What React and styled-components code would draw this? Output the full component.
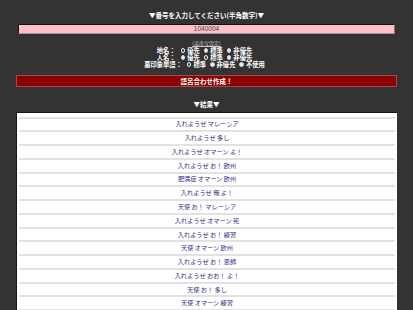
import React from 'react'
import styled, { createGlobalStyle } from 'styled-components'

const GlobalStyle = createGlobalStyle`
  html, body {
    margin: 0;
    padding: 0;
    background: #333333;
  }
  body {
    font-family: "Noto Sans CJK JP", "Liberation Sans", sans-serif;
  }
`;

const Page = styled.div`
  width: 413px;
  min-height: 310px;
  box-sizing: border-box;
  padding: 11px 16px 0;
  background: #333333;
  color: #ffffff;
  display: flex;
  flex-direction: column;
  align-items: stretch;
`;

const Heading = styled.div`
  font-size: 6.5px;
  font-weight: bold;
  line-height: 8px;
  text-align: center;
  margin-top: ${p => p.$top || 0}px;
`;

const NumberInput = styled.div`
  margin: 5px 2px 0;
  height: 10px;
  box-sizing: border-box;
  background: #ffc0cb;
  border-top: 1px solid #111;
  border-left: 1px solid #111;
  border-right: 1px solid #777;
  border-bottom: 1px solid #999;
  color: #444;
  font-family: "Liberation Sans", sans-serif;
  font-size: 6.5px;
  line-height: 8px;
  text-align: center;
`;

const Settings = styled.div`
  margin-top: 5px;
  display: flex;
  flex-direction: column;
  align-items: center;
`;

const SettingsLink = styled.a`
  font-size: 5px;
  line-height: 7px;
  color: #cccccc;
  text-decoration: underline;
  margin-bottom: 1px;
`;

const OptionRow = styled.div`
  display: flex;
  align-items: center;
  font-size: 6.3px;
  font-weight: bold;
  line-height: 7px;
  height: 7px;
`;

const Label = styled.span`
  margin-right: 5px;
`;

const Option = styled.span`
  display: inline-flex;
  align-items: center;
  margin-right: 4px;
`;

const Radio = styled.span`
  display: inline-block;
  width: 4.5px;
  height: 4.5px;
  box-sizing: border-box;
  border-radius: 50%;
  margin-right: 2px;
  background: ${p => (p.$checked ? '#444' : '#eeeeee')};
  border: ${p => (p.$checked ? '1.3px solid #eeeeee' : '0.5px solid #ccc')};
`;

const Button = styled.button`
  margin-top: 6.5px;
  height: 12px;
  box-sizing: border-box;
  padding: 0;
  background: #8b0000;
  border: 1px solid #a84848;
  color: #ffffff;
  font-family: "Noto Sans CJK JP", "Liberation Sans", sans-serif;
  font-size: 6.5px;
  font-weight: bold;
  line-height: 10px;
  text-align: center;
`;

const ResultTable = styled.div`
  margin-top: 4px;
  background: #ffffff;
  border-top: 1px solid #151515;
  border-left: 1px solid #151515;
  padding: 0 2px;
  display: flex;
  flex-direction: column;
`;

const Row = styled.div`
  height: ${p => (p.$empty ? 6 : 13.77)}px;
  box-sizing: border-box;
  border-bottom: 2px solid #e2e2e2;
  display: flex;
  align-items: center;
  justify-content: center;
  color: #2f2f88;
  font-size: 6.2px;
  line-height: 8px;
`;

const settings = [
  { label: '地名：', options: ['優先', '標準', '非優先'], checked: 0 },
  { label: '人名：', options: ['優先', '標準', '非優先'], checked: 1 },
  { label: '悪印象単語：', options: ['標準', '非優先', '不使用'], checked: 0 },
];

const results = [
  '入れようぜ マレーシア',
  '入れようぜ 多し',
  '入れようぜ オマーン よ！',
  '入れようぜ お！ 欧州',
  '肥満症 オマーン 欧州',
  '入れようぜ 俺 よ！',
  '天使 お！ マレーシア',
  '入れようぜ オマーン 死',
  '入れようぜ お！ 練習',
  '天使 オマーン 欧州',
  '入れようぜ お！ 恩師',
  '入れようぜ おお！ よ！',
  '天使 お！ 多し',
  '天使 オマーン 練習',
];

export default function App() {
  return (
    <>
      <GlobalStyle />
      <Page>
        <Heading>▼番号を入力してください(半角数字)▼</Heading>
        <NumberInput>1040004</NumberInput>
        <Settings>
          <SettingsLink>(高度な設定)</SettingsLink>
          {settings.map(s => (
            <OptionRow key={s.label}>
              <Label>{s.label}</Label>
              {s.options.map((o, i) => (
                <Option key={o}>
                  <Radio $checked={i === s.checked} />
                  {o}
                </Option>
              ))}
            </OptionRow>
          ))}
        </Settings>
        <Button>語呂合わせ作成！</Button>
        <Heading $top={13}>▼結果▼</Heading>
        <ResultTable>
          <Row $empty />
          {results.map((r, i) => (
            <Row key={i}>{r}</Row>
          ))}
        </ResultTable>
      </Page>
    </>
  )
}
